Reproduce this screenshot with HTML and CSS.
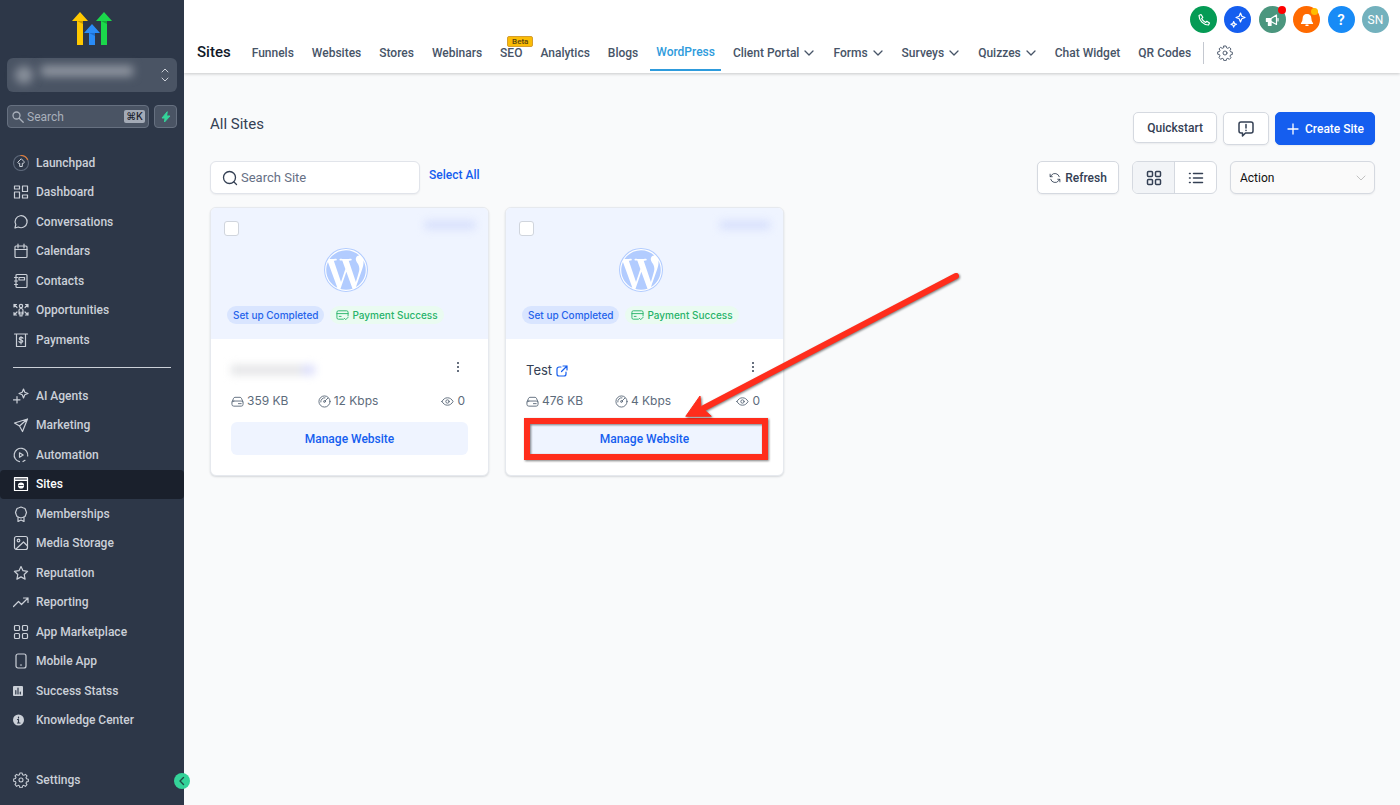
FILE: index.html
```
<!DOCTYPE html>
<html lang="en">

<head>
    <meta charset="UTF-8">
    <meta name="viewport" content="width=device-width, initial-scale=1.0">
    <title>Sites - WordPress</title>
    <link rel="stylesheet" href="styles.css">
</head>

<body>
    <!-- shared icons -->
    <svg class="sprite" aria-hidden="true">
        <symbol id="chevron" viewBox="0 0 12 12"><path d="M2 4l4 4 4-4" /></symbol>
        <symbol id="gear" viewBox="0 0 24 24"><circle cx="12" cy="12" r="3" /><path d="M10.3 2.5h3.4l.6 2.7 1.9.8 2.4-1.5 2.4 2.4-1.5 2.4.8 1.9 2.7.6v3.4l-2.7.6-.8 1.9 1.5 2.4-2.4 2.4-2.4-1.5-1.9.8-.6 2.7h-3.4l-.6-2.7-1.9-.8-2.4 1.5L3 19.700l1.500-2.400-.8-1.900L1 14.800v-3.400l2.700-.6.8-1.900L3 6.900l2.400-2.400L7.800 6l1.900-.8z" transform="translate(0 -1)" /></symbol>
        <symbol id="grid" viewBox="0 0 16 16"><rect x="1.500" y="1.500" width="5" height="5" rx="1" /><rect x="9.500" y="1.500" width="5" height="5" rx="1" /><rect x="1.500" y="9.500" width="5" height="5" rx="1" /><rect x="9.500" y="9.500" width="5" height="5" rx="1" /></symbol>
        <symbol id="wp" viewBox="0 0 24 24"><circle cx="12" cy="12" r="12" fill="#fff" /><path fill="#b2ccff" d="M21.469 6.825c.84 1.537 1.318 3.3 1.318 5.175 0 3.979-2.156 7.456-5.363 9.325l3.295-9.527c.615-1.54.82-2.771.82-3.864 0-.405-.026-.78-.07-1.11m-7.981.105c.647-.03 1.232-.105 1.232-.105.582-.075.514-.93-.067-.899 0 0-1.755.135-2.88.135-1.064 0-2.85-.15-2.85-.15-.585-.03-.661.855-.075.885 0 0 .54.061 1.125.09l1.68 4.605-2.37 7.08L5.354 6.9c.649-.03 1.234-.1 1.234-.1.585-.075.516-.93-.065-.896 0 0-1.746.138-2.874.138-.2 0-.438-.008-.69-.015C4.911 3.15 8.235 1.215 12 1.215c2.809 0 5.365 1.072 7.286 2.833-.046-.003-.091-.009-.141-.009-1.06 0-1.812.923-1.812 1.914 0 .89.513 1.643 1.06 2.531.411.72.89 1.643.89 2.977 0 .915-.354 1.994-.821 3.479l-1.075 3.585-3.9-11.61.001.014zM12 22.784c-1.059 0-2.081-.153-3.048-.437l3.237-9.406 3.315 9.087c.024.053.05.101.078.149-1.12.393-2.325.609-3.582.609M1.211 12c0-1.564.336-3.05.935-4.39L7.29 21.709C3.694 19.96 1.212 16.271 1.211 12" /><circle cx="12" cy="12" r="11.700" fill="none" stroke="#b2ccff" stroke-width=".6" /></symbol>
        <symbol id="card-check" viewBox="0 0 14 12"><path d="M8 10.500H2.500a1.500 1.500 0 0 1-1.500-1.500V3a1.500 1.500 0 0 1 1.500-1.500h9A1.500 1.500 0 0 1 13 3v4M1 4.500h12M3.500 7.500h2M9 9.500l1.500 1.500L13 8.500" /></symbol>
        <symbol id="external" viewBox="0 0 12 12"><path d="M5 2H3a2 2 0 0 0-2 2v5a2 2 0 0 0 2 2h5a2 2 0 0 0 2-2V7M7 1h4v4M11 1L5.500 6.500" /></symbol>
        <symbol id="disk" viewBox="0 0 14 12"><path d="M1 6.500l1.800-4A1.700 1.700 0 0 1 4.300 1.500h5.400a1.700 1.700 0 0 1 1.500 1l1.800 4M3 5.500h8a2 2 0 0 1 2 2V9a2 2 0 0 1-2 2H3a2 2 0 0 1-2-2V7.500a2 2 0 0 1 2-2zM8 8.300h3" /></symbol>
        <symbol id="gauge" viewBox="0 0 14 14"><circle cx="7" cy="7" r="6" /><circle cx="7" cy="7" r="1" /><path d="M7.700 6.300l3-3M3 7.500A4 4 0 0 1 7.500 3" /></symbol>
        <symbol id="eye" viewBox="0 0 14 12"><path d="M1 6c1.300-2.500 3.400-4 6-4s4.700 1.500 6 4c-1.300 2.500-3.400 4-6 4S2.300 8.500 1 6z" /><circle cx="7" cy="6" r="1.800" /></symbol>
    </svg>

    <div class="app">
        <aside class="sidebar">
            <svg class="logo" viewBox="0 0 40 34" role="img" aria-label="Logo">
                <path fill="#ffc800" d="M8 0l8 9h-5v24H5V9H0z" />
                <path fill="#c99a00" d="M5 9h6v3z" />
                <path fill="#2a8cf7" d="M20 12l8 9h-5v12h-6V21h-5z" />
                <path fill="#1d6fd0" d="M17 21h6v3z" />
                <path fill="#1bd74b" d="M32 0l8 9h-5v24h-6V9h-5z" />
                <path fill="#13a838" d="M29 9h6v3z" />
            </svg>

            <button class="account" aria-label="Switch account">
                <span class="account-avatar"></span>
                <span class="account-name"></span>
                <svg viewBox="0 0 8 14"><path d="M1 4l3-3 3 3M1 10l3 3 3-3" /></svg>
            </button>

            <div class="quick">
                <label class="quick-search">
                    <svg viewBox="0 0 12 12"><circle cx="4.500" cy="4.500" r="3.500" /><path d="M7.200 7.200l4 4" /></svg>
                    <input type="text" placeholder="Search" aria-label="Search">
                    <kbd>⌘K</kbd>
                </label>
                <button class="bolt" aria-label="Quick actions"><svg viewBox="0 0 10 12"><path d="M6 1L1 7h3l-.5 4L9 5H6z" /></svg></button>
            </div>

            <nav class="menu">
                <a href="#"><svg viewBox="0 0 16 16"><circle cx="8" cy="8" r="7.500" stroke="#5b6678" /><path stroke="#dd7a38" d="M8 .5a7.500 7.500 0 0 1 6.500 4" /><path d="M8 4L4.800 7.200c0 1 .5 1.300 1.900 1.100V11.500h2.600V8.300c1.400.2 1.900-.1 1.900-1.100z" stroke-width="1" /></svg>Launchpad</a>
                <a href="#"><svg viewBox="0 0 16 16"><path d="M1.500 2h5v3h-5zM9.500 2h5v5.500h-5zM1.500 8h5v6h-5zM9.500 11h5v3h-5z" /></svg>Dashboard</a>
                <a href="#"><svg viewBox="0 0 16 16"><path d="M2 14l.8-3.500A6 6 0 1 1 5.300 13z" /></svg>Conversations</a>
                <a href="#"><svg viewBox="0 0 16 16"><rect x="2" y="3" width="12" height="11.500" rx="1" /><path d="M2 6.500h12M5 1v4M11 1v4" /></svg>Calendars</a>
                <a href="#"><svg viewBox="0 0 16 16"><rect x="3" y="1.500" width="11" height="13" rx="1" /><rect x="6" y="4.500" width="5.500" height="2.500" /><path d="M1.500 4.500h3M1.500 8h3M1.500 11.500h3" /></svg>Contacts</a>
                <a href="#"><svg viewBox="0 0 16 16"><circle cx="8" cy="4" r="1.700" /><path d="M6 12V8.500a2 2 0 0 1 4 0V12M7 10v4h2v-4M1 5V2.500h2.500M1 2.500l3 3M15 5V2.500h-2.500M15 2.500l-3 3M1 10.500V13h2.500M1 13l3-3M15 10.500V13h-2.500M15 13l-3-3" /></svg>Opportunities</a>
                <a href="#"><svg viewBox="0 0 16 16"><path d="M1.500 2h13M3.500 2v12.500h9V2M10 6.200C9.500 5 6.300 5 6.300 6.700c0 1.800 3.500.8 3.500 2.600 0 1.500-3.300 1.600-3.800.2M8 4.500V12" /></svg>Payments</a>
                <hr>
                <a href="#"><svg viewBox="0 0 16 16"><path d="M10.500 1l1.300 3.200L15 5.500l-3.200 1.300-1.300 3.200-1.300-3.200L6 5.500l3.200-1.300zM4 8.500v6.500M.5 11.800H7" /></svg>AI Agents</a>
                <a href="#"><svg viewBox="0 0 16 16"><path d="M14.500 2L1.500 6l5 3 3 5.500zM14.500 2l-8 7" /></svg>Marketing</a>
                <a href="#"><svg viewBox="0 0 16 16"><path d="M6.500 5.800v4.400l3.700-2.200zM14.700 9A6.800 6.800 0 1 0 6.500 14.700M10 14.500l2-1.200" /></svg>Automation</a>
                <a href="#" class="active"><svg viewBox="0 0 16 16"><path d="M1.500 1.500h13v13h-13zM1.500 4.500h13" /><path d="M1.500 3h13" /><circle cx="8" cy="9.500" r="2.500" fill="currentColor" /><path stroke="#1a202c" stroke-width=".8" d="M6 9.500h4" /></svg>Sites</a>
                <a href="#"><svg viewBox="0 0 16 16"><path d="M8 1l2 .8 2 .7.800 2 .7 2-.7 2-.8 2-2 .800L8 12l-2-.7-2-.800-.8-2-.7-2 .7-2 .8-2 2-.7zM5 11v4.500l3-1.500 3 1.500V11" /></svg>Memberships</a>
                <a href="#"><svg viewBox="0 0 16 16"><rect x="1.500" y="1.500" width="13" height="13" rx="2" /><circle cx="5.500" cy="5.500" r="1.300" /><path d="M3 14l7.500-7 4 4" /></svg>Media Storage</a>
                <a href="#"><svg viewBox="0 0 16 16"><path d="M8 1.500l2 4.200 4.600.6-3.400 3.200.900 4.600L8 11.900l-4.100 2.200.9-4.600L1.400 6.300 6 5.700z" /></svg>Reputation</a>
                <a href="#"><svg viewBox="0 0 16 16"><path d="M.5 12.500l5-5 3 3 6.500-6.500M10.500 4H15v4.500" /></svg>Reporting</a>
                <a href="#"><svg viewBox="0 0 16 16"><use href="#grid" /></svg>App Marketplace</a>
                <a href="#"><svg viewBox="0 0 16 16"><rect x="3" y="1" width="10" height="14" rx="2" /><path d="M7.500 12h1" /></svg>Mobile App</a>
                <a href="#"><svg viewBox="0 0 16 16"><rect x="0" y="3" width="10" height="10" rx="1" fill="currentColor" stroke="none" /><path stroke="#2d3748" d="M2.800 7.500V11M5 5v6M7.300 9v2" /></svg>Success Statss</a>
                <a href="#"><svg viewBox="0 0 16 16"><circle cx="5.500" cy="8" r="5.500" fill="currentColor" stroke="none" /><path stroke="#2d3748" d="M5.500 5v1M4.500 7.500h1V11M4.500 11h2.500" /></svg>Knowledge Center</a>
            </nav>

            <a href="#" class="settings"><svg viewBox="0 0 16 16"><use href="#gear" /></svg>Settings</a>
            <button class="collapse" aria-label="Collapse menu"><svg viewBox="0 0 10 10"><path d="M6.500 1.500L3 5l3.500 3.500" /></svg></button>
        </aside>

        <div class="page">
            <header class="topbar">
                <div class="actions">
                    <button class="round phone" aria-label="Phone"><svg viewBox="0 0 14 14"><path d="M2 2.500c0 5 4.500 9.500 9.500 9.500l1-2-2.700-1.700-1.300 1.200C7 8.800 5.300 7 4.600 5.600l1.200-1.300L4 1.500z" /></svg></button>
                    <button class="round spark" aria-label="AI assistant"><svg viewBox="0 0 16 16"><path d="M10.500 1l1.300 3.200L15 5.500l-3.200 1.300-1.300 3.200-1.300-3.200L6 5.500l3.200-1.300zM3.700 9.500l.800 2 2 .8-2 .800-.8 2-.8-2-2-.8 2-.8z" /></svg></button>
                    <button class="round news" aria-label="Announcements"><svg viewBox="0 0 14 14"><path d="M1.500 5.500H6L11.500 2v9.500L6 8.500v4H3.500v-4h-2z" /><path class="fill" d="M1.500 5.500H6v3H5.500v4h-2v-4h-2z" /><path d="M13 5.500v2.500" /></svg><i class="dot red"></i></button>
                    <button class="round bell" aria-label="Notifications"><svg viewBox="0 0 14 14"><path class="fill" d="M7 1.500c2.500 0 3.800 2 3.800 4.200 0 2.600.7 3.800 1.700 4.800h-11c1-1 1.700-2.200 1.700-4.800C3.200 3.500 4.500 1.500 7 1.500zM6 12h2v.5H6z" /></svg><i class="dot amber"></i></button>
                    <button class="round help" aria-label="Help">?</button>
                    <button class="round user" aria-label="Profile">SN</button>
                </div>
                <nav class="tabs">
                    <h1>Sites</h1>
                    <a href="#">Funnels</a>
                    <a href="#">Websites</a>
                    <a href="#">Stores</a>
                    <a href="#">Webinars</a>
                    <a href="#">SEO<span class="beta">Beta</span></a>
                    <a href="#">Analytics</a>
                    <a href="#">Blogs</a>
                    <a href="#" class="current">WordPress</a>
                    <a href="#">Client Portal<svg><use href="#chevron" /></svg></a>
                    <a href="#">Forms<svg><use href="#chevron" /></svg></a>
                    <a href="#">Surveys<svg><use href="#chevron" /></svg></a>
                    <a href="#">Quizzes<svg><use href="#chevron" /></svg></a>
                    <a href="#">Chat Widget</a>
                    <a href="#">QR Codes</a>
                    <button class="tab-settings" aria-label="Settings"><svg><use href="#gear" /></svg></button>
                </nav>
            </header>

            <main class="content">
                <div class="heading">
                    <h2>All Sites</h2>
                    <button class="btn quickstart">Quickstart</button>
                    <button class="btn feedback" aria-label="Feedback"><svg viewBox="0 0 18 18"><path d="M4 2h10a2 2 0 0 1 2 2v7a2 2 0 0 1-2 2H8.500L5.500 16v-3H4a2 2 0 0 1-2-2V4a2 2 0 0 1 2-2zM9 4.500v3.500M9 10.300v.2" /></svg></button>
                    <button class="btn create"><svg viewBox="0 0 14 14"><path d="M7 2v10M2 7h10" /></svg>Create Site</button>
                </div>

                <div class="toolbar">
                    <label class="search">
                        <svg viewBox="0 0 16 16"><circle cx="7.500" cy="7.500" r="6" /><path d="M12 12l2.500 2.500" /></svg>
                        <input type="text" placeholder="Search Site" aria-label="Search Site">
                    </label>
                    <button class="select-all">Select All</button>
                    <button class="btn refresh"><svg viewBox="0 0 14 14"><path d="M12 5.500A5.300 5.300 0 0 0 3 3.500L1.500 5.500M2 8.500a5.300 5.300 0 0 0 9 2l1.500-2M1.300 2.500v3h2.500M12.700 11.500v-3h-2.500" /></svg>Refresh</button>
                    <div class="views">
                        <button class="on" aria-label="Grid view"><svg><use href="#grid" /></svg></button>
                        <button aria-label="List view"><svg viewBox="0 0 16 16"><path d="M5.500 3.500H14.500M5.500 8H14.500M5.500 12.500H14.500M1.500 3.500h.7M1.500 8h.7M1.500 12.500h.7" /></svg></button>
                    </div>
                    <div class="action">
                        <select aria-label="Action">
                            <option>Action</option>
                        </select>
                        <svg><use href="#chevron" /></svg>
                    </div>
                </div>

                <div class="cards">
                    <article class="card">
                        <div class="card-top">
                            <div class="card-row">
                                <input type="checkbox" aria-label="Select site">
                                <span class="plan"></span>
                            </div>
                            <svg class="wp"><use href="#wp" /></svg>
                            <div class="tags">
                                <span class="tag blue">Set up Completed</span>
                                <span class="tag green"><svg><use href="#card-check" /></svg>Payment Success</span>
                            </div>
                        </div>
                        <div class="card-body">
                            <div class="name">
                                <span class="masked"></span>
                                <button class="more" aria-label="More"><i></i><i></i><i></i></button>
                            </div>
                            <div class="stats">
                                <span><svg><use href="#disk" /></svg>359 KB</span>
                                <span><svg><use href="#gauge" /></svg>12 Kbps</span>
                                <span><svg><use href="#eye" /></svg>0</span>
                            </div>
                            <button class="manage">Manage Website</button>
                        </div>
                    </article>

                    <article class="card">
                        <div class="card-top">
                            <div class="card-row">
                                <input type="checkbox" aria-label="Select Test">
                                <span class="plan"></span>
                            </div>
                            <svg class="wp"><use href="#wp" /></svg>
                            <div class="tags">
                                <span class="tag blue">Set up Completed</span>
                                <span class="tag green"><svg><use href="#card-check" /></svg>Payment Success</span>
                            </div>
                        </div>
                        <div class="card-body">
                            <div class="name">
                                <a href="#">Test <svg><use href="#external" /></svg></a>
                                <button class="more" aria-label="More"><i></i><i></i><i></i></button>
                            </div>
                            <div class="stats">
                                <span><svg><use href="#disk" /></svg>476 KB</span>
                                <span><svg><use href="#gauge" /></svg>4 Kbps</span>
                                <span><svg><use href="#eye" /></svg>0</span>
                            </div>
                            <div class="marked">
                                <button class="manage">Manage Website</button>
                                <span class="outline"></span>
                                <svg class="arrow" viewBox="0 0 280 150">
                                    <path d="M272 6L20 138" stroke="#ff2d1c" stroke-width="6" stroke-linecap="round" />
                                    <path fill="#ff2d1c" d="M2 146l14-20 1 11 10 9z" stroke="#ff2d1c" />
                                </svg>
                            </div>
                        </div>
                    </article>
                </div>
            </main>
        </div>
    </div>
</body>

</html>
```
FILE: styles.css
```
* {
    box-sizing: border-box;
}

body {
    margin: 0;
    font-family: Roboto, sans-serif;
    font-size: 12px;
    color: #344054;
    background: #f9fafb;
}

button,
input,
select {
    font: inherit;
    color: inherit;
}

button {
    padding: 0;
    border: none;
    background: none;
    cursor: pointer;
}

a {
    color: inherit;
    text-decoration: none;
}

svg {
    flex: none;
    fill: none;
    stroke: currentColor;
    stroke-linecap: round;
    stroke-linejoin: round;
}

.sprite {
    position: absolute;
    width: 0;
    height: 0;
}

.app {
    display: flex;
    min-height: 100vh;
}

/* sidebar */
.sidebar {
    position: relative;
    display: flex;
    flex-direction: column;
    flex: none;
    width: 184px;
    padding: 12px 0 10px;
    color: #cbd0d8;
    background: #2d3748;
    font-weight: 500;
}

.logo {
    width: 40px;
    height: 34px;
    margin: 0 auto 12px;
    stroke: none;
}

.account {
    display: flex;
    align-items: center;
    gap: 8px;
    height: 34px;
    margin: 0 7px;
    padding: 0 8px;
    border-radius: 6px;
    background: #4a5464;
}

.account-avatar {
    width: 18px;
    height: 18px;
    border-radius: 50%;
    background: #8b929d;
    filter: blur(5px);
}

.account-name {
    width: 92px;
    height: 10px;
    margin-bottom: 8px;
    background: #969ca6;
    filter: blur(5px);
}

.account svg {
    width: 8px;
    height: 14px;
    margin-left: auto;
}

.quick {
    display: flex;
    gap: 5px;
    height: 23px;
    margin: 13px 7px 20px;
}

.quick-search,
.bolt {
    display: flex;
    align-items: center;
    border: 1px solid #667080;
    border-radius: 4px;
    background: #4a5464;
}

.quick-search {
    flex: 1;
    gap: 3px;
    min-width: 0;
    padding: 0 3px 0 4px;
    color: #a9b0bb;
    font-weight: 400;
}

.quick-search svg {
    width: 12px;
    height: 12px;
    stroke-width: 1.3;
}

.quick-search input {
    flex: 1;
    min-width: 0;
    padding: 0;
    border: none;
    outline: none;
    background: none;
}

input::placeholder {
    color: inherit;
    opacity: 1;
}

kbd {
    padding: 0 2px;
    border-radius: 2px;
    color: #1a202c;
    background: #a3aab6;
    font: 500 10px/13px Inter, "DejaVu Sans", sans-serif;
}

.bolt {
    justify-content: center;
    width: 23px;
    color: #34d399;
}

.bolt svg {
    width: 10px;
    height: 12px;
    fill: currentColor;
}

.menu {
    display: flex;
    flex: 1;
    flex-direction: column;
}

.menu a,
.settings {
    display: flex;
    align-items: center;
    gap: 7px;
    padding: 0 13px;
    border-radius: 4px;
}

.menu a {
    flex: 1;
    min-height: 28px;
}

.menu svg,
.settings svg {
    width: 16px;
    height: 16px;
    stroke-width: 1.2;
}

.menu hr {
    width: 158px;
    margin: 13px auto;
    border: none;
    border-top: 1px solid #cbd0d8;
}

.menu .active {
    color: #fff;
    background: #1a202c;
}

.settings {
    height: 30px;
    margin-top: 30px;
}

.settings svg {
    stroke-width: 1.6;
}

.collapse {
    position: absolute;
    right: -6px;
    bottom: 16px;
    width: 16px;
    height: 16px;
    border-radius: 50%;
    color: #1f4a45;
    background: #34d399;
}

.collapse svg {
    display: block;
    width: 10px;
    height: 10px;
    margin: auto;
    stroke-width: 1.4;
}

/* top bar */
.page {
    flex: 1;
    min-width: 0;
}

.topbar {
    background: #fff;
    box-shadow: 0 1px 3px rgba(0, 0, 0, 0.2);
}

.actions {
    display: flex;
    justify-content: space-between;
    width: 199px;
    margin-left: auto;
    margin-right: 11px;
    padding-top: 6px;
}

.round {
    position: relative;
    display: flex;
    align-items: center;
    justify-content: center;
    width: 27px;
    height: 27px;
    border-radius: 50%;
    color: #fff;
}

.round svg {
    width: 14px;
    height: 14px;
    stroke-width: 1.2;
}

.spark svg {
    width: 16px;
    height: 16px;
}

.round .fill {
    fill: currentColor;
}

.phone {
    background: #059b55;
}

.spark {
    background: #155eef;
}

.news {
    background: #4b967e;
}

.bell {
    background: #ff6a00;
}

.help {
    background: #188bf6;
    font: 600 14px Inter, sans-serif;
}

.user {
    background: #73b1bd;
}

.dot {
    position: absolute;
    top: 0;
    right: 0;
    width: 8px;
    height: 8px;
    border-radius: 50%;
}

.red {
    background: #ff0000;
}

.amber {
    top: 2px;
    right: 2px;
    width: 7px;
    height: 7px;
    background: #ffbc00;
}

.tabs {
    display: flex;
    align-items: center;
    gap: 6px;
    height: 40px;
    padding-left: 13px;
    color: #475467;
    font-weight: 500;
}

.tabs h1 {
    margin: 0 9px 2px 0;
    color: #101828;
    font-size: 15px;
    font-weight: 500;
}

.tabs a {
    position: relative;
    display: flex;
    align-items: center;
    gap: 4px;
    height: 38px;
    padding: 2px 6px 0;
    margin-bottom: 2px;
    white-space: nowrap;
}

.tabs a svg {
    width: 12px;
    height: 12px;
    stroke-width: 1.3;
}

.tabs .current {
    color: #2e9bdc;
    border-bottom: 2px solid #2e9bdc;
}

.beta {
    position: absolute;
    top: 3px;
    left: 13px;
    padding: 0 4px;
    border: 1px solid #d69e2e;
    border-radius: 2px;
    color: #5a4510;
    background: #fbbc05;
    font-size: 8px;
    line-height: 9px;
}

.tab-settings {
    height: 22px;
    padding-left: 13px;
    border-left: 1px solid #c4c8d0;
}

.tab-settings svg {
    display: block;
    width: 16px;
    height: 16px;
    stroke-width: 1.4;
}

/* content */
.content {
    padding: 39px 25px 39px 26px;
}

.heading,
.toolbar {
    display: flex;
    align-items: flex-start;
}

.heading {
    gap: 6px;
    margin-bottom: 16px;
}

.heading h2 {
    margin: 2px auto 0 0;
    font-size: 15px;
    font-weight: 400;
    line-height: 20px;
}

.btn {
    display: flex;
    align-items: center;
    justify-content: center;
    gap: 5px;
    height: 33px;
    border: 1px solid #d5d9e0;
    border-radius: 5px;
    background: #fff;
    font-weight: 500;
    box-shadow: 0 1px 2px rgba(16, 24, 40, 0.06);
}

.quickstart {
    height: 31px;
    padding: 0 13px;
}

.feedback {
    width: 46px;
}

.feedback svg {
    width: 18px;
    height: 18px;
    stroke-width: 1.5;
}

.create {
    padding: 0 10px;
    border-color: #155eef;
    color: #fff;
    background: #155eef;
}

.create svg {
    width: 14px;
    height: 14px;
    stroke-width: 1.3;
}

.toolbar {
    gap: 13px;
    margin-bottom: 13px;
}

.search {
    display: flex;
    align-items: center;
    gap: 3px;
    width: 210px;
    height: 33px;
    margin-right: -4px;
    padding: 0 11px;
    border: 1px solid #e1e4ea;
    border-radius: 6px;
    color: #667085;
    background: #fff;
    box-shadow: 0 1px 2px rgba(16, 24, 40, 0.06);
}

.search svg {
    width: 16px;
    height: 16px;
    color: #344054;
    stroke-width: 1.3;
}

.search input {
    flex: 1;
    min-width: 0;
    padding: 0;
    border: none;
    outline: none;
    background: none;
    font-size: 13px;
}

.select-all {
    margin-right: auto;
    color: #155eef;
    font-weight: 500;
    line-height: 28px;
}

.refresh {
    width: 82px;
    gap: 4px;
}

.refresh svg {
    width: 12px;
    height: 12px;
}

.views {
    display: flex;
    width: 85px;
    height: 33px;
    border: 1px solid #d5d9e0;
    border-radius: 6px;
    background: #fff;
    overflow: hidden;
}

.views button {
    display: flex;
    flex: 1;
    align-items: center;
    justify-content: center;
}

.views button + button {
    border-left: 1px solid #d5d9e0;
}

.views .on {
    background: #f2f4f7;
}

.views svg {
    width: 16px;
    height: 16px;
    stroke-width: 1.5;
}

.action {
    position: relative;
    width: 145px;
}

.action select {
    display: block;
    width: 100%;
    height: 33px;
    padding: 0 9px;
    border: 1px solid #d5d9e0;
    border-radius: 6px;
    color: #101010;
    background: #fafafa;
    font-size: 12px;
    appearance: none;
    box-shadow: 0 1px 2px rgba(16, 24, 40, 0.06);
}

.action svg {
    position: absolute;
    top: 11px;
    right: 8px;
    width: 12px;
    height: 12px;
    color: #c2c2c2;
    pointer-events: none;
}

.cards {
    display: grid;
    grid-template-columns: repeat(auto-fill, 279px);
    gap: 16px;
    font-family: Inter, sans-serif;
}

.card {
    border: 1px solid #e6e9ee;
    border-radius: 6px;
    background: #fff;
    box-shadow: 0 1px 2px rgba(16, 24, 40, 0.15);
}

.card-top {
    display: flex;
    flex-direction: column;
    height: 131px;
    padding: 13px;
    border-radius: 5px 5px 0 0;
    background: #eff4ff;
}

.card-row {
    display: flex;
    justify-content: space-between;
}

.card-row input {
    width: 15px;
    height: 15px;
    margin: 0;
    border: 1px solid #d0d5dd;
    border-radius: 3px;
    background: #fff;
    appearance: none;
}

.card-row input:checked {
    background: #155eef;
}

.plan {
    width: 50px;
    height: 8px;
    background: #d5defc;
    filter: blur(4px);
}

.wp {
    align-self: center;
    width: 44px;
    height: 44px;
    margin-top: 12px;
    margin-right: 7px;
    stroke: none;
}

.tags {
    display: flex;
    gap: 6px;
    margin-top: 14px;
    padding-left: 3px;
}

.tag {
    display: flex;
    align-items: center;
    gap: 3px;
    height: 18px;
    padding: 0 6px;
    border-radius: 9px;
    font-size: 10px;
    font-weight: 500;
    white-space: nowrap;
}

.tag svg {
    width: 13px;
    height: 12px;
}

.blue {
    color: #2463eb;
    background: #d9e5ff;
}

.green {
    color: #27b36a;
    background: #eafbf1;
}

.card-body {
    padding: 20px;
}

.name {
    display: flex;
    justify-content: space-between;
    height: 22px;
    padding-right: 9px;
}

.name a {
    font-size: 13px;
    line-height: 22px;
}

.name a svg {
    width: 12px;
    height: 12px;
    color: #155eef;
    stroke-width: 1.2;
    vertical-align: -2px;
}

.masked {
    width: 84px;
    height: 10px;
    margin-top: 6px;
    background: linear-gradient(90deg, #e4e5e7 84%, #dcdefb 84%);
    filter: blur(4px);
}

.more {
    display: flex;
    flex-direction: column;
    gap: 2px;
    padding-top: 3px;
}

.more i {
    width: 2px;
    height: 2px;
    border-radius: 50%;
    background: #344054;
}

.stats {
    display: grid;
    grid-template-columns: 1fr auto 1fr;
    margin: 10px 3px 11px 0;
    color: #5d6b7b;
    line-height: 20px;
}

.stats span {
    display: flex;
    align-items: center;
    gap: 3px;
}

.stats span:last-child {
    justify-content: flex-end;
}

.stats svg {
    width: 13px;
    height: 13px;
}

.manage {
    width: 100%;
    height: 33px;
    border-radius: 6px;
    color: #155eef;
    background: #eff4ff;
    font: 500 12px Roboto, sans-serif;
}

/* callout over the second card */
.marked {
    position: relative;
}

.outline {
    position: absolute;
    inset: -4px -5px -5px -2px;
    border: 6px solid #ff2d1c;
    filter: drop-shadow(1px 1px 1px rgba(0, 0, 0, 0.5));
    pointer-events: none;
}

.arrow {
    position: absolute;
    left: 158px;
    bottom: 35px;
    width: 280px;
    height: 150px;
    filter: drop-shadow(1px 1px 1px rgba(0, 0, 0, 0.5));
    pointer-events: none;
}
```
